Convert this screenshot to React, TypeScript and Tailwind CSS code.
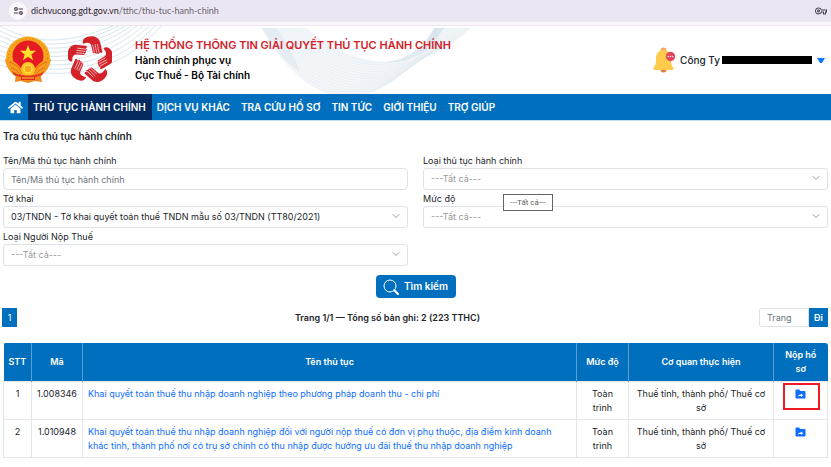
import React from "react";
import { FaHome } from "react-icons/fa";
import { MdOutlineVpnKey } from "react-icons/md";
import { ChevronDown } from "lucide-react";

const waves = Array.from({ length: 16 }, (_, i) => i / 15);

function HeaderPattern() {
  return (
    <svg className="absolute left-0 top-0 h-full w-[480px]" viewBox="0 26 480 68" fill="none" aria-hidden="true">
      {waves.slice(0, 9).map((_, i) => (
        <path
          key={i}
          d={`M-4 ${64 - i * 5} C${44 - i} ${78 - i * 4} ${112 - i * 6} ${84 - i * 5} ${161 - i * 6} 26`}
          stroke="#d3e2ed"
          strokeWidth="0.9"
        />
      ))}
      <path d="M262 28 C312 119 385 119 436 28 L470 28 C430 74 360 74 306 28Z" fill="#dfe9f1" fillOpacity="0.35" />
      {waves.map((t) => (
        <path
          key={t}
          d={`M${262 + 44 * t} 28 C${312 + 36 * t} ${119 - 45 * t} ${385 + 30 * t} ${119 - 45 * t} ${436 + 34 * t} 28`}
          stroke="#e0e9f0"
          strokeWidth="0.6"
        />
      ))}
      <path d="M262 28 C275 50 285 62 300 72 C296 58 286 42 276 28Z" fill="#c9dbe8" fillOpacity="0.3" />
      <path d="M385 62 C408 60 424 46 434 28 L444 28 C428 52 412 64 385 62Z" fill="#c4d7e6" fillOpacity="0.5" />
    </svg>
  );
}

function NationalEmblem() {
  return (
    <svg className="h-12 w-12 shrink-0" viewBox="0 0 48 48" role="img" aria-label="Quốc huy">
      <path d="M12 36 L11 46 L17 45 L24 47 L31 45 L38 46 L36 36Z" fill="#ee8a1d" />
      <ellipse cx="24" cy="22" rx="22" ry="21.5" fill="#f7a81b" />
      <ellipse cx="24" cy="22" rx="19.5" ry="19" fill="none" stroke="#ea8a1c" strokeWidth="1.5" strokeDasharray="1.5 2" />
      <circle cx="24" cy="20" r="15.5" fill="#e51b23" />
      <path d="M24 9l2.100 5.700h6l-4.800 3.700 1.800 5.800-5.100-3.500-5.100 3.500 1.800-5.800-4.800-3.700h6z" fill="#ffe22b" />
      <path d="M1 23c6 0 11 3 15 8l8 7 8-7c4-5 9-8 15-8-1 8-5 13-10 17H11C6 36 2 31 1 23z" fill="#f49a1c" />
      <path d="M5 26c7 2 11 6 13 11M43 26c-7 2-11 6-13 11M7 32c5 1 8 4 9 7M41 32c-5 1-8 4-9 7" stroke="#e5641d" strokeWidth="0.8" fill="none" />
      <circle cx="24" cy="33" r="7" fill="#ffc425" />
      <circle cx="24" cy="33" r="4" fill="#f7a81b" stroke="#ffe94a" strokeWidth="1" />
      <path d="M8 35c6 6 26 6 32 0l-2 4c-7 4-21 4-28 0z" fill="#e5391f" />
      <path d="M17 40h14v4H17z" fill="#e32a20" />
      <path d="M18 42h12" stroke="#ffd928" strokeWidth="1" />
    </svg>
  );
}

function HandsLogo() {
  return (
    <svg className="ml-4 h-12 w-11 shrink-0" viewBox="-66 -72 132 144" role="img" aria-label="Dịch vụ công">
      {[0, 72, 144, 216, 288].map((angle) => (
        <g key={angle} transform={`rotate(${angle})`}>
          <path
            d="M-21 -49 C-25 -62 -12 -71 3 -71 C19 -71 28 -64 31 -51 L37 -24 C35 -20 32 -20 30 -24 L28 -20 C25 -17 23 -18 22 -22 C20 -17 16 -18 15 -22 C12 -18 8 -21 8 -25 L3 -45 C1 -53 -9 -54 -21 -49Z"
            fill="#d3222a"
          />
          <path d="M8 -46 L13 -22 M15 -48 L20 -22 M22 -48 L27 -22" stroke="#fff" strokeWidth="1.800" />
        </g>
      ))}
    </svg>
  );
}

function Bell() {
  return (
    <svg className="h-[26px] w-[23px]" viewBox="0 0 23 26" aria-hidden="true">
      <circle cx="10.5" cy="22.5" r="3" fill="#e8793a" />
      <circle cx="10.5" cy="3.2" r="2.8" fill="#f9a65a" />
      <path d="M10.500 3C5.500 3 3 7 3 11.500c0 5-.6 7-2.400 9C0 21.500.4 23 1.800 23H19c1.600 0 2-1.500 1.300-2.500-1.700-2-2.300-4-2.300-9C18 7 15.500 3 10.500 3z" fill="#ffcb4c" />
      <circle cx="17.500" cy="9.500" r="4.700" fill="#e2455c" />
      <circle cx="15.200" cy="9.500" r=".7" fill="#fff" />
      <circle cx="17.500" cy="9.500" r=".7" fill="#fff" />
      <circle cx="19.800" cy="9.500" r=".7" fill="#fff" />
    </svg>
  );
}

function FolderShare() {
  return (
    <svg className="h-[10px] w-[11px]" viewBox="0 0 22 20" aria-hidden="true">
      <path d="M1 3c0-1.500 1-2 2-2h5l3 3h8c1.300 0 2 .8 2 2H1z" fill="#0d6efd" />
      <path d="M1 6h20v10.500c0 1.500-1 2.500-2.500 2.500h-15C2 19 1 18 1 16.500z" fill="#0d6efd" />
      <path d="M6 15c.5-3 3-4 6-4V9l4.500 3.500-4.500 3.500v-2c-2.500 0-4.500 0-6 1z" fill="#fff" />
    </svg>
  );
}

function SelectField({ id, label, value, filled }: { id: string; label: string; value: string; filled?: boolean }) {
  return (
    <div>
      <label htmlFor={id} className="block h-[15px] text-[9px] leading-[15px]">
        {label}
      </label>
      <div className="relative">
        <select
          id={id}
          className={`block h-[22px] w-full appearance-none rounded-[3px] border border-[#dee2e6] bg-white pl-[7px] pr-6 text-[9px] ${
            filled ? "text-[#212529]" : "text-[#999]"
          }`}
        >
          <option>{value}</option>
        </select>
        <ChevronDown className="pointer-events-none absolute right-[6px] top-[4px] h-3 w-3 text-[#999]" />
      </div>
    </div>
  );
}

const nav = ["DỊCH VỤ KHÁC", "TRA CỨU HỒ SƠ", "TIN TỨC", "GIỚI THIỆU", "TRỢ GIÚP"];

const rows = [
  {
    code: "1.008346",
    name: "Khai quyết toán thuế thu nhập doanh nghiệp theo phương pháp doanh thu - chi phí",
    marked: true,
  },
  {
    code: "1.010948",
    name: "Khai quyết toán thuế thu nhập doanh nghiệp đối với người nộp thuế có đơn vị phụ thuộc, địa điểm kinh doanh khác tỉnh, thành phố nơi có trụ sở chính có thu nhập được hưởng ưu đãi thuế thu nhập doanh nghiệp",
    marked: false,
  },
];

export default function App() {
  return (
    <div className="min-h-screen bg-white font-['Inter','Noto_Sans',sans-serif] text-[#212529]">
      <div className="flex h-[26px] items-start border-b border-[#ebe5ee] bg-[#fdf5fd]">
        <div className="flex h-[22px] w-full items-center bg-[#ece6f2] pl-[9px] pr-1">
          <button aria-label="Thông tin trang" className="flex h-[18px] w-[18px] items-center justify-center rounded-full bg-[#fdf7fd]">
            <svg className="h-2 w-[9px]" viewBox="0 0 9 8" fill="none" stroke="#47434b" strokeWidth="1.2">
              <circle cx="2" cy="2" r="1.300" />
              <path d="M4.500 2H9M0 6h4.500" />
              <circle cx="7" cy="6" r="1.300" />
            </svg>
          </button>
          <span className="ml-1 font-['Lato','Noto_Sans',sans-serif] text-[9px] leading-[22px] text-[#69646e]">
            <span className="text-[#27242a]">dichvucong.gdt.gov.vn</span>/tthc/thu-tuc-hanh-chinh
          </span>
          <MdOutlineVpnKey className="ml-auto h-3 w-3 text-[#47434b]" />
        </div>
      </div>

      <header className="relative h-[68px] overflow-hidden">
        <HeaderPattern />
        <div className="relative flex h-full items-center pl-1">
          <NationalEmblem />
          <HandsLogo />
          <div className="ml-[23px] text-[10px] font-semibold leading-[15px] text-black">
            <p className="text-[11px] leading-[15px] text-[#d3222a]">HỆ THỐNG THÔNG TIN GIẢI QUYẾT THỦ TỤC HÀNH CHÍNH</p>
            <p>Hành chính phục vụ</p>
            <p>Cục Thuế - Bộ Tài chính</p>
          </div>
          <div className="ml-auto flex items-center pr-[6px]">
            <Bell />
            <button className="ml-1 flex items-center text-[10px] font-medium">
              Công Ty
              <span className="ml-[2px] h-2 w-[90px] bg-black" />
              <svg className="ml-[5px] h-[5px] w-2" viewBox="0 0 8 5" aria-hidden="true">
                <path d="M0 0h8L5 5H3z" fill="#0d7bff" />
              </svg>
            </button>
          </div>
        </div>
      </header>

      <nav className="flex h-[27px] items-stretch border-b border-[#c6dff0] bg-[#006fbe] text-[10px] font-semibold text-white">
        <a href="#home" aria-label="Trang chủ" className="flex w-7 items-center justify-center pl-[2px]">
          <FaHome className="h-[15px] w-[15px]" />
        </a>
        <a href="#tthc" className="flex items-center bg-[#032b5f] pl-[5px] pr-[6px]">
          THỦ TỤC HÀNH CHÍNH
        </a>
        {nav.map((item) => (
          <a key={item} href="#menu" className="flex items-center pl-[5px] pr-[6px]">
            {item}
          </a>
        ))}
      </nav>

      <main className="px-[3px]">
        <h1 className="pt-[7px] text-[10px] font-semibold leading-4">Tra cứu thủ tục hành chính</h1>
        <form className="mt-[9px] grid grid-cols-2 gap-x-[15px] gap-y-px">
          <div>
            <label htmlFor="name" className="block h-[15px] text-[9px] leading-[15px]">
              Tên/Mã thủ tục hành chính
            </label>
            <input
              id="name"
              placeholder="Tên/Mã thủ tục hành chính"
              className="block h-[22px] w-full rounded-[4px] border border-[#dee2e6] px-[7px] text-[9px] placeholder:text-[#6c757d]"
            />
          </div>
          <SelectField id="kind" label="Loại thủ tục hành chính" value="---Tất cả---" />
          <SelectField
            id="declaration"
            label="Tờ khai"
            value="03/TNDN - Tờ khai quyết toán thuế TNDN mẫu số 03/TNDN (TT80/2021)"
            filled
          />
          <div className="relative">
            <SelectField id="level" label="Mức độ" value="---Tất cả---" />
            <div
              role="tooltip"
              className="absolute left-20 top-[3px] flex h-[17px] w-[50px] items-center justify-center whitespace-nowrap border border-[#666] bg-white font-['Roboto','Noto_Sans',sans-serif] text-[8px] text-[#666]"
            >
              ---Tất cả---
            </div>
          </div>
          <SelectField id="payer" label="Loại Người Nộp Thuế" value="---Tất cả---" />
        </form>

        <div className="mt-[9px] flex justify-center">
          <button className="flex h-[23px] w-20 items-center justify-center gap-[5px] rounded-[4px] bg-[#006fbe] text-[10px] font-semibold text-white">
            <svg className="h-4 w-4" viewBox="0 0 16 16" fill="none" stroke="currentColor" aria-hidden="true">
              <circle cx="7" cy="7" r="6" strokeWidth="1" />
              <path d="M11.300 11.300L15 15" strokeWidth="2" strokeLinecap="round" />
            </svg>
            Tìm kiếm
          </button>
        </div>

        <div className="mt-[10px] grid h-[19px] grid-cols-[1fr_auto_1fr] items-stretch text-[9px]">
          <button className="-ml-px w-[15px] bg-[#006fbe] text-white">1</button>
          <p className="pr-14 font-semibold leading-[19px]">Trang 1/1 — Tổng số bản ghi: 2 (223 TTHC)</p>
          <div className="flex justify-end">
            <input aria-label="Trang" placeholder="Trang" className="w-[50px] rounded-l-[2px] border border-[#dee2e6] px-[7px] placeholder:text-[#6c757d]" />
            <button className="w-[19px] bg-[#006fbe] font-semibold text-white">Đi</button>
          </div>
        </div>

        <div className="mt-4 overflow-hidden rounded-t-[3px]">
          <table className="w-full table-fixed border-collapse text-center text-[9px] leading-[14px]">
            <colgroup>
              <col className="w-7" />
              <col className="w-[51px]" />
              <col />
              <col className="w-[52px]" />
              <col className="w-[145px]" />
              <col className="w-[54px]" />
            </colgroup>
            <thead>
              <tr className="h-[38px] bg-[#006fbe] text-white">
                {["STT", "Mã", "Tên thủ tục", "Mức độ", "Cơ quan thực hiện", "Nộp hồ sơ"].map((h) => (
                  <th key={h} className="border-x border-[#5a9fd3] px-[5px] font-semibold first:border-l-0 last:border-r-0">
                    {h}
                  </th>
                ))}
              </tr>
            </thead>
            <tbody>
              {rows.map((r, i) => (
                <tr key={r.code} className="h-[38px] align-top">
                  <td className="border border-[#e4e7ea] pt-[5px]">{i + 1}</td>
                  <td className="border border-[#e4e7ea] pt-[5px]">{r.code}</td>
                  <td className="border border-[#e4e7ea] px-[5px] pt-[5px] text-left">
                    <a href="#detail" className="text-[#0d6efd]">
                      {r.name}
                    </a>
                  </td>
                  <td className="border border-[#e4e7ea] px-[5px] pt-[5px]">Toàn trình</td>
                  <td className="border border-[#e4e7ea] px-[5px] pt-[5px]">Thuế tỉnh, thành phố/ Thuế cơ sở</td>
                  <td className="relative border border-[#e4e7ea] pt-[7px]">
                    {r.marked && <span className="absolute left-[9px] top-px h-[27px] w-[37px] border-2 border-[#ed1c24]" />}
                    <button aria-label={`Nộp hồ sơ ${r.code}`} className="mx-auto block">
                      <FolderShare />
                    </button>
                  </td>
                </tr>
              ))}
            </tbody>
          </table>
        </div>
      </main>
    </div>
  );
}
